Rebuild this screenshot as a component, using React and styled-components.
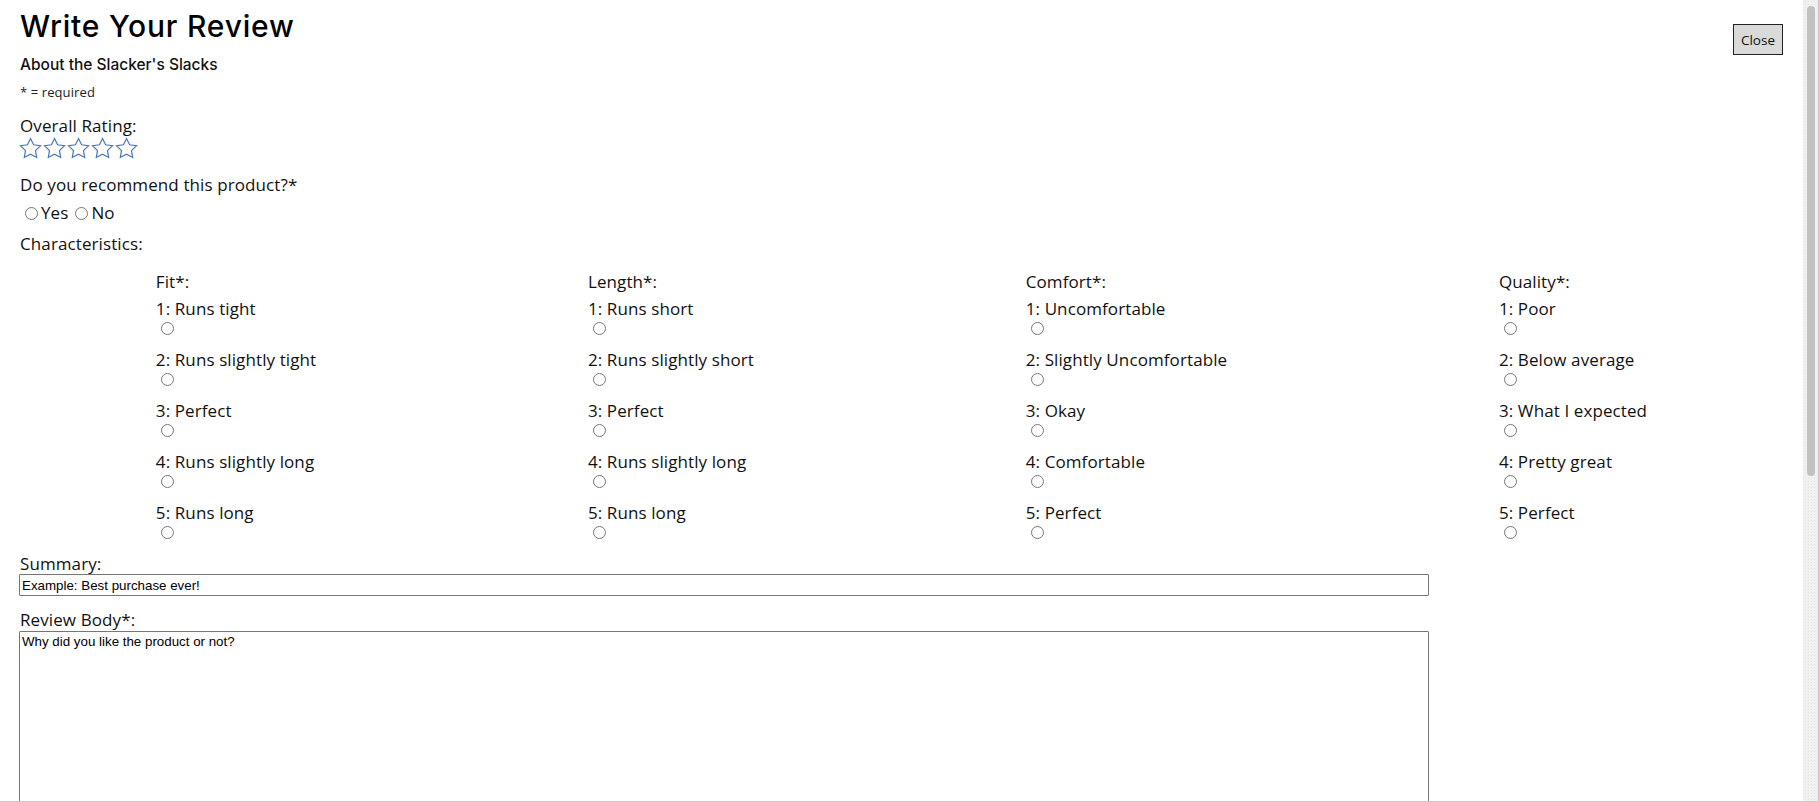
import React from "react";
import styled, { createGlobalStyle } from "styled-components";

const Global = createGlobalStyle`
  html, body { margin: 0; padding: 0; background: #fff; }
  body { font-family: "Open Sans", "DejaVu Sans", sans-serif; color: #111; }
  * { box-sizing: border-box; }
`;

const Shell = styled.div`
  position: fixed;
  inset: 0;
  display: flex;
  background: #fff;
  border-right: 1px solid #c8c8c8;
  border-bottom: 1px solid #c8c8c8;
`;

const Content = styled.div`
  flex: 1;
  min-width: 0;
  overflow-y: auto;
  scrollbar-width: none;
  padding: 0 20px 340px 20px;
  font-size: 17px;
  line-height: 20px;
  letter-spacing: 0.1px;
  &::-webkit-scrollbar { display: none; }
`;

const ScrollRail = styled.div`
  flex: none;
  width: 15px;
  padding: 6px 3px 0 3px;
  background-color: #f1f1f1;
  background-image: radial-gradient(#e2e2e2 0.6px, transparent 0.7px);
  background-size: 3px 3px;
  border-left: 1px solid #ececec;
`;

const ScrollThumb = styled.div`
  height: 470px;
  border-radius: 5px;
  background: #c1c1c1;
`;

const Header = styled.header`
  display: flex;
  justify-content: space-between;
  align-items: flex-start;
`;

const HeadBlock = styled.div`
  display: flex;
  flex-direction: column;
`;

const Title = styled.h1`
  margin: 6px 0 0 0;
  font-family: Inter, "Noto Sans", sans-serif;
  font-weight: 500;
  font-size: 30px;
  line-height: 40px;
  letter-spacing: 0.8px;
  color: #000;
`;

const Subtitle = styled.h3`
  margin: 9px 0 0 0;
  font-family: Inter, "Noto Sans", sans-serif;
  font-weight: 500;
  font-size: 15.5px;
  line-height: 20px;
  letter-spacing: 0;
  color: #111;
`;

const Note = styled.div`
  margin-top: ${(p) => p.$mt || 0}px;
  font-size: 13px;
  line-height: 16px;
  color: #222;
`;

const CloseButton = styled.button`
  margin-top: 24px;
  height: 31px;
  padding: 0 7px;
  font-family: "Open Sans", sans-serif;
  font-size: 13.5px;
  color: #111;
  background: #dadada;
  border: 1px solid #222;
  border-radius: 0;
  cursor: pointer;
`;

const Label = styled.div`
  margin-top: ${(p) => p.$mt || 0}px;
  line-height: 20px;
  color: #111;
`;

const Stars = styled.div`
  display: flex;
  margin-top: 2px;
  height: 21px;
`;

const StarSvg = styled.svg`
  display: block;
  overflow: visible;
  flex: none;
`;

const ChoiceRow = styled.div`
  display: flex;
  align-items: center;
  margin-top: 8px;
  height: 20px;
`;

const Choice = styled.label`
  display: inline-flex;
  align-items: center;
  margin-right: 2px;
`;

const Radio = styled.input.attrs({ type: "radio" })`
  width: 13px;
  height: 13px;
  margin: ${(p) => (p.$block ? "3px 0 0 5px" : "0 3px 0 5px")};
  display: ${(p) => (p.$block ? "block" : "inline-block")};
`;

const CharGrid = styled.div`
  display: flex;
  justify-content: space-around;
  margin-top: 18px;
`;

const CharColumn = styled.div`
  display: flex;
  flex-direction: column;
`;

const ColumnTitle = styled.div`
  line-height: 20px;
  margin-bottom: 7px;
`;

const Option = styled.div`
  margin-bottom: 15px;
`;

const OptionText = styled.div`
  line-height: 20px;
  white-space: nowrap;
`;

const TextInput = styled.input`
  display: block;
  width: 80%;
  height: 22px;
  margin: 0 0 0 -1px;
  padding: 1px 2px;
  font-family: "Liberation Sans", Arial, sans-serif;
  font-size: 13.333px;
  color: #000;
  border: 1px solid #767676;
  border-radius: 1px;
  &::placeholder { color: #000; opacity: 1; }
`;

const TextArea = styled.textarea`
  display: block;
  width: 80%;
  height: 400px;
  margin: 1px 0 0 -1px;
  padding: 2px 2px;
  font-family: "Liberation Sans", Arial, sans-serif;
  font-size: 13.333px;
  color: #000;
  border: 1px solid #767676;
  border-radius: 1px;
  resize: vertical;
  &::placeholder { color: #000; opacity: 1; }
`;

const Star = () => (
  <StarSvg width="24" height="21" viewBox="1.5 1.5 24 21">
    <polygon
      points="12,2 15.09,8.26 22,9.27 17,14.14 18.18,21.02 12,17.77 5.82,21.02 7,14.14 2,9.27 8.91,8.26"
      fill="none"
      stroke="#4677c0"
      strokeWidth="1.2"
      strokeLinejoin="miter"
    />
  </StarSvg>
);

const characteristics = [
  {
    name: "Fit",
    options: ["Runs tight", "Runs slightly tight", "Perfect", "Runs slightly long", "Runs long"],
  },
  {
    name: "Length",
    options: ["Runs short", "Runs slightly short", "Perfect", "Runs slightly long", "Runs long"],
  },
  {
    name: "Comfort",
    options: ["Uncomfortable", "Slightly Uncomfortable", "Okay", "Comfortable", "Perfect"],
  },
  {
    name: "Quality",
    options: ["Poor", "Below average", "What I expected", "Pretty great", "Perfect"],
  },
];

export default function App() {
  return (
    <>
      <Global />
      <Shell>
        <Content>
          <Header>
            <HeadBlock>
              <Title>Write Your Review</Title>
              <Subtitle>About the Slacker's Slacks</Subtitle>
              <Note $mt={9}>* = required</Note>
            </HeadBlock>
            <CloseButton>Close</CloseButton>
          </Header>

          <Label $mt={16}>Overall Rating:</Label>
          <Stars>
            {[0, 1, 2, 3, 4].map((i) => (
              <Star key={i} />
            ))}
          </Stars>

          <Label $mt={16}>Do you recommend this product?*</Label>
          <ChoiceRow>
            <Choice>
              <Radio name="recommend" value="yes" />Yes
            </Choice>
            <Choice>
              <Radio name="recommend" value="no" />No
            </Choice>
          </ChoiceRow>

          <Label $mt={11}>Characteristics:</Label>
          <CharGrid>
            {characteristics.map((c) => (
              <CharColumn key={c.name}>
                <ColumnTitle>{c.name}*:</ColumnTitle>
                {c.options.map((o, i) => (
                  <Option key={o + i}>
                    <OptionText>
                      {i + 1}: {o}
                    </OptionText>
                    <Radio $block name={c.name} value={i + 1} />
                  </Option>
                ))}
              </CharColumn>
            ))}
          </CharGrid>

          <Label>Summary:</Label>
          <TextInput placeholder="Example: Best purchase ever!" />

          <Label $mt={14}>Review Body*:</Label>
          <TextArea placeholder="Why did you like the product or not?" />
        </Content>
        <ScrollRail>
          <ScrollThumb />
        </ScrollRail>
      </Shell>
    </>
  );
}
